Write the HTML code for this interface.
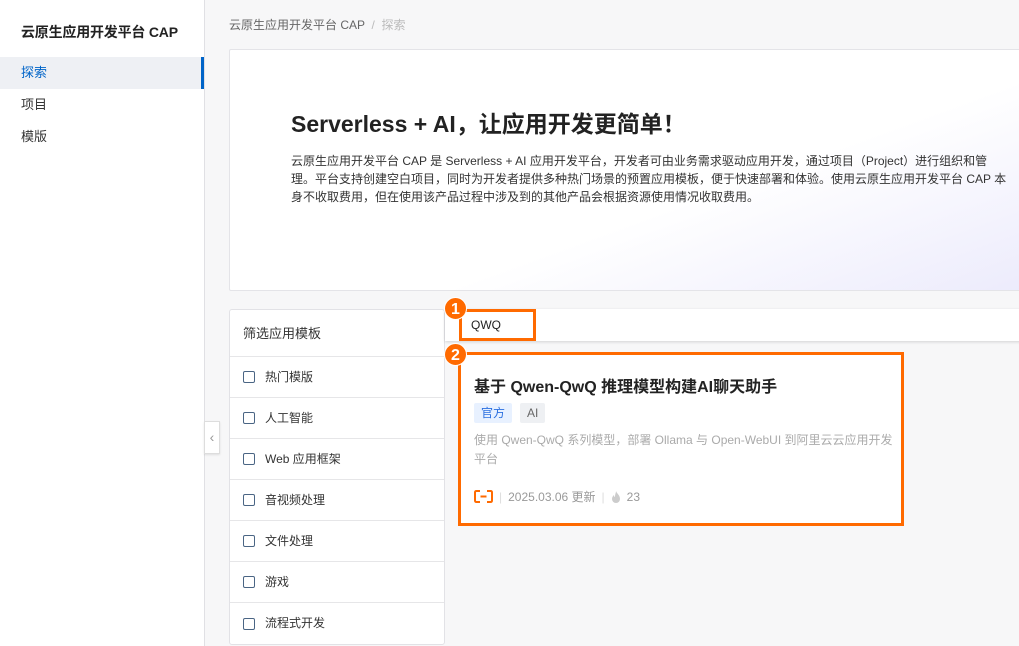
<!DOCTYPE html>
<html><head><meta charset="utf-8"><style>
*{box-sizing:border-box;margin:0;padding:0}
body{width:1019px;height:646px;overflow:hidden;background:#f7f7f8;font-family:"Liberation Sans","Noto Sans CJK SC",sans-serif;color:#333;position:relative}
.side{position:absolute;left:0;top:0;width:205px;height:646px;background:#fff;border-right:1px solid #e0e0e4}
.title{position:absolute;left:21px;top:22px;font-size:14px;font-weight:bold;color:#222;letter-spacing:-0.2px}
.nav{position:absolute;left:0;width:204px;height:32px;line-height:32px;padding-left:21px;font-size:13px;color:#333}
.act{background:#eef0f4;color:#0064c8;border-right:3px solid #0064c8}
.bc{position:absolute;left:229px;top:16px;font-size:12px;color:#666}
.bc span{color:#bbb}
.hero{position:absolute;left:229px;top:49px;width:800px;height:242px;background:linear-gradient(160deg,#fff 60%,#ecebfc);border:1px solid #e4e4e8;border-radius:2px}
.hero h1{position:absolute;left:61px;top:55px;font-size:23px;font-weight:bold;color:#222}
.hero p{position:absolute;left:61px;top:102px;width:720px;font-size:12px;line-height:18px;color:#333}
.filter{position:absolute;left:229px;top:309px;width:216px;height:336px;background:#fff;border:1px solid #e2e2e6;border-radius:3px}
.fh{height:47px;line-height:47px;padding-left:13px;font-size:13px;color:#333;border-bottom:1px solid #e6e6e8}
.fi{height:41px;line-height:41px;padding-left:13px;font-size:12px;color:#333;border-bottom:1px solid #e6e6e8;display:flex;align-items:center}
.fi:last-child{border-bottom:none}
.cb{width:12px;height:12px;border:1px solid #4a6584;border-radius:2px;margin-right:10px}
.tog{position:absolute;left:204px;top:421px;width:16px;height:33px;background:#fff;border:1px solid #ddd;box-shadow:0 1px 2px rgba(0,0,0,.1);color:#999;font-size:14px;line-height:31px;text-align:center}
.search{position:absolute;left:445px;top:309px;width:580px;height:32px;background:#fff;box-shadow:0 1px 3px rgba(0,0,0,.15)}
.sbox{position:absolute;left:459px;top:309px;width:77px;height:32px;border:3px solid #ff6a00;font-size:12px;line-height:26px;padding-left:9px;color:#222}
.card{position:absolute;left:458px;top:352px;width:446px;height:174px;background:#fff;border:3px solid #ff6a00}
.card h2{position:absolute;left:13px;top:18px;font-size:16px;font-weight:bold;color:#222;white-space:nowrap}
.tag{position:absolute;top:48px;height:20px;line-height:20px;padding:0 7px;font-size:12px;border-radius:2px}
.desc{position:absolute;left:13px;top:76px;width:420px;font-size:12px;line-height:19px;color:#aaa}
.foot{position:absolute;left:13px;top:133px;font-size:12px;color:#999;display:flex;align-items:center;gap:6px}
.bd{position:absolute;width:23px;height:23px;border-radius:50%;background:#ff6a00;color:#fff;font-weight:bold;font-size:16px;text-align:center;line-height:23px;border:1px solid #fff}
</style></head><body>
<div class="side">
<div class="title">云原生应用开发平台 CAP</div>
<div class="nav act" style="top:57px">探索</div>
<div class="nav" style="top:89px">项目</div>
<div class="nav" style="top:121px">模版</div>
</div>
<div class="bc">云原生应用开发平台 CAP &nbsp;<span>/</span>&nbsp; <span>探索</span></div>
<div class="hero"><h1>Serverless + AI，让应用开发更简单！</h1>
<p>云原生应用开发平台 CAP 是 Serverless + AI 应用开发平台，开发者可由业务需求驱动应用开发，通过项目（Project）进行组织和管理。平台支持创建空白项目，同时为开发者提供多种热门场景的预置应用模板，便于快速部署和体验。使用云原生应用开发平台 CAP 本身不收取费用，但在使用该产品过程中涉及到的其他产品会根据资源使用情况收取费用。</p></div>
<div class="filter">
<div class="fh">筛选应用模板</div>
<div class="fi"><div class="cb"></div>热门模版</div>
<div class="fi"><div class="cb"></div>人工智能</div>
<div class="fi"><div class="cb"></div>Web 应用框架</div>
<div class="fi"><div class="cb"></div>音视频处理</div>
<div class="fi"><div class="cb"></div>文件处理</div>
<div class="fi"><div class="cb"></div>游戏</div>
<div class="fi"><div class="cb"></div>流程式开发</div>
</div>
<div class="tog">‹</div>
<div class="search"></div>
<div class="sbox">QWQ</div>
<div class="card">
<h2>基于 Qwen-QwQ 推理模型构建AI聊天助手</h2>
<div class="tag" style="left:13px;background:#e8f1ff;color:#2a6fe0">官方</div>
<div class="tag" style="left:59px;background:#eef0f3;color:#666">AI</div>
<div class="desc">使用 Qwen-QwQ 系列模型，部署 Ollama 与 Open-WebUI 到阿里云云应用开发平台</div>
<div class="foot"><svg width="19" height="13" viewBox="0 0 19 13"><path d="M6 1H2.5Q1 1 1 2.5v8Q1 12 2.5 12H6M13 1h3.5Q18 1 18 2.5v8Q18 12 16.5 12H13M6.5 6.5h6" stroke="#ff6a00" stroke-width="2" fill="none"/></svg><span style="color:#ddd">|</span>2025.03.06 更新<span style="color:#ddd">|</span><svg width="10" height="12" viewBox="0 0 10 12"><path d="M5 0C6 3 9 4 9 8a4 4 0 0 1-8 0c0-2 1-3 2-4 0 2 1 2 1 2 0-3 1-4 1-6z" fill="#ccc"/></svg>23</div>
</div>
<div class="bd" style="left:444px;top:297px">1</div>
<div class="bd" style="left:444px;top:343px">2</div>
</body></html>
